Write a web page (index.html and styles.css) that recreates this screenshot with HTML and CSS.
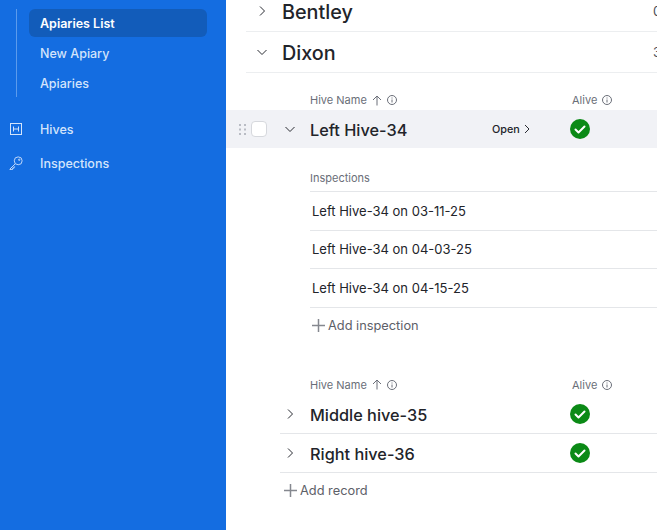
FILE: index.html
```html
<!DOCTYPE html>
<html><head>
<title>Apiaries List</title>
<link rel="stylesheet" href="styles.css">
</head>
<body>

<div class="sidebar">
	<div class="subnav">
		<a class="subnav-item current">Apiaries List</a>
		<a class="subnav-item">New Apiary</a>
		<a class="subnav-item">Apiaries</a>
	</div>
	<a class="nav-item">
		<svg class="nav-icon" width="14" height="14" viewBox="0 0 14 14" fill="none" stroke="currentColor">
			<rect x="1.5" y="1.5" width="11" height="11"/>
			<path d="M4.500 4.500v5M9.500 4.500v5M4.500 7h5"/>
		</svg>
		Hives
	</a>
	<a class="nav-item">
		<svg class="nav-icon" width="14" height="14" viewBox="0 0 16 16" fill="none" stroke="currentColor">
			<circle cx="10.500" cy="5.500" r="4.500"/>
			<circle cx="11.700" cy="4.300" r="0.800"/>
			<path d="M7 9l-6 6v0.500h3v-1.500h1.500v-1.500h1.500"/>
		</svg>
		Inspections
	</a>
</div>

<div class="main">
	<div class="group group-first">
		<svg class="chev" width="12" height="12" viewBox="0 0 12 12"><path d="M4 1.500l4.500 4.500-4.500 4.500"/></svg>
		<span class="group-name">Bentley</span>
		<span class="group-count">0</span>
	</div>
	<div class="group">
		<svg class="chev" width="12" height="12" viewBox="0 0 12 12"><path d="M1.500 4l4.500 4.500 4.500-4.500"/></svg>
		<span class="group-name">Dixon</span>
		<span class="group-count">3</span>
	</div>

	<div class="col-head col-head-first">
		<span class="col-name">Hive Name
			<svg class="sort" width="10" height="11" viewBox="0 0 10 11"><path d="M5 10.500V1M1 5l4-4 4 4"/></svg>
			<svg class="info" width="10" height="10" viewBox="0 0 10 10"><circle cx="5" cy="5" r="4.500"/><path d="M5 4.500v3M5 2.500v1"/></svg>
		</span>
		<span class="col-alive">Alive
			<svg class="info" width="10" height="10" viewBox="0 0 10 10"><circle cx="5" cy="5" r="4.500"/><path d="M5 4.500v3M5 2.500v1"/></svg>
		</span>
	</div>

	<div class="hive hive-open">
		<svg class="grip" width="7" height="11" viewBox="0 0 7 11"><path d="M0 0h2v2H0zM5 0h2v2H5zM0 4.500h2v2H0zM5 4.500h2v2H5zM0 9h2v2H0zM5 9h2v2H5z"/></svg>
		<span class="checkbox"></span>
		<svg class="chev" width="12" height="12" viewBox="0 0 12 12"><path d="M1.500 4l4.500 4.500 4.500-4.500"/></svg>
		<span class="hive-name">Left Hive-34</span>
		<span class="open">Open
			<svg class="chev" width="8" height="10" viewBox="0 0 8 10"><path d="M2 1l4 4-4 4"/></svg>
		</span>
		<svg class="tick" width="20" height="20" viewBox="0 0 20 20"><circle cx="10" cy="10" r="10"/><path d="M5.500 10.500l3 3 6-6"/></svg>
	</div>

	<div class="inspections">
		<div class="insp-head">Inspections</div>
		<div class="insp-row">Left Hive-34 on 03-11-25</div>
		<div class="insp-row">Left Hive-34 on 04-03-25</div>
		<div class="insp-row">Left Hive-34 on 04-15-25</div>
		<div class="add add-insp">
			<svg class="plus" width="13" height="13" viewBox="0 0 13 13"><path d="M6.500 0v13M0 6.500h13"/></svg>
			Add inspection
		</div>
	</div>

	<div class="col-head">
		<span class="col-name">Hive Name
			<svg class="sort" width="10" height="11" viewBox="0 0 10 11"><path d="M5 10.500V1M1 5l4-4 4 4"/></svg>
			<svg class="info" width="10" height="10" viewBox="0 0 10 10"><circle cx="5" cy="5" r="4.500"/><path d="M5 4.500v3M5 2.500v1"/></svg>
		</span>
		<span class="col-alive">Alive
			<svg class="info" width="10" height="10" viewBox="0 0 10 10"><circle cx="5" cy="5" r="4.500"/><path d="M5 4.500v3M5 2.500v1"/></svg>
		</span>
	</div>

	<div class="hive hive-closed">
		<svg class="chev" width="12" height="12" viewBox="0 0 12 12"><path d="M4 1.500l4.500 4.500-4.500 4.500"/></svg>
		<span class="hive-name">Middle hive-35</span>
		<svg class="tick" width="20" height="20" viewBox="0 0 20 20"><circle cx="10" cy="10" r="10"/><path d="M5.500 10.500l3 3 6-6"/></svg>
	</div>
	<div class="hive hive-closed">
		<svg class="chev" width="12" height="12" viewBox="0 0 12 12"><path d="M4 1.500l4.500 4.500-4.500 4.500"/></svg>
		<span class="hive-name">Right hive-36</span>
		<svg class="tick" width="20" height="20" viewBox="0 0 20 20"><circle cx="10" cy="10" r="10"/><path d="M5.500 10.500l3 3 6-6"/></svg>
	</div>

	<div class="add add-record">
		<svg class="plus" width="13" height="13" viewBox="0 0 13 13"><path d="M6.500 0v13M0 6.500h13"/></svg>
		Add record
	</div>
</div>

</body>
</html>
```

FILE: styles.css
```css
html, body
{
	height: 100%;
}
body
{
	margin: 0;
	display: flex;
	overflow: hidden;
	background-color: white;
	color: #22242a;
	font-family: "Inter", "Liberation Sans", sans-serif;
}
svg
{
	flex: none;
	display: block;
}
.sidebar
{
	width: 226px;
	flex: none;
	box-sizing: border-box;
	padding-top: 9px;
	background-color: #146de1;
	color: #d3e4fb;
	font-size: 12.5px;
	font-weight: 500;
}
.subnav
{
	display: flex;
	flex-direction: column;
	gap: 2px;
	margin: 0 19px 15px 16px;
	padding-left: 12px;
	border-left: 1px solid #5c9bec;
}
.subnav-item
{
	height: 28px;
	line-height: 29px;
	padding-left: 11px;
	border-radius: 6px;
}
.subnav-item.current
{
	background-color: #125cba;
	color: white;
	font-weight: 600;
}
.nav-item
{
	display: flex;
	align-items: center;
	height: 34px;
}
.nav-icon
{
	margin-left: 9px;
	margin-right: 17px;
}
.main
{
	flex: 1;
	min-width: 0;
	overflow: hidden;
}
.group
{
	display: flex;
	align-items: center;
	height: 40px;
	margin-left: 20px;
	border-bottom: 1px solid #eceef0;
}
.group-first
{
	height: 22px;
	padding-bottom: 9px;
}
.group .chev
{
	margin-left: 10px;
	margin-right: 14px;
}
.group-name
{
	flex: 1;
	padding-top: 2px;
	font-size: 19.8px;
	line-height: 22px;
	font-weight: 500;
}
.group-count
{
	margin-right: -1px;
	width: 5px;
	overflow: hidden;
	font-size: 13px;
	color: #4b4f58;
}
.chev path
{
	fill: none;
	stroke: #2a2c33;
	stroke-width: 1;
}
.col-head
{
	display: flex;
	align-items: center;
	height: 20px;
	margin-top: 33px;
	padding-left: 84px;
	font-size: 11px;
	color: #6a6e78;
}
.col-head-first
{
	margin-top: 17px;
}
.col-name, .col-alive
{
	display: flex;
	align-items: center;
	gap: 5px;
}
.col-name
{
	width: 262px;
}
.sort path, .info path, .info circle
{
	fill: none;
	stroke: #6a6e78;
	stroke-width: 1;
}
.hive
{
	display: flex;
	align-items: center;
	box-sizing: border-box;
	font-size: 16.3px;
	font-weight: 500;
}
.hive-open
{
	height: 38px;
	background-color: #f1f2f6;
	padding-left: 13px;
}
.hive-closed
{
	height: 39px;
	margin-left: 54px;
	border-bottom: 1px solid #e4e6e9;
}
.hive-name
{
	padding-top: 2px;
}
.grip path
{
	fill: #b9bcc4;
}
.checkbox
{
	width: 14px;
	height: 14px;
	margin-left: 5px;
	margin-right: 17px;
	border: 1px solid #d6d8dd;
	border-radius: 4px;
	background-color: white;
}
.hive .chev
{
	margin-right: 14px;
}
.hive-closed .chev
{
	margin-left: 4px;
}
.hive-open .hive-name
{
	width: 182px;
}
.hive-closed .hive-name
{
	width: 260px;
}
.open
{
	display: flex;
	align-items: center;
	width: 78px;
	gap: 3px;
	font-size: 10.8px;
	font-weight: 500;
}
.open .chev
{
	margin: 0;
}
.tick circle
{
	fill: #0b8a16;
}
.tick path
{
	fill: none;
	stroke: white;
	stroke-width: 2;
	stroke-linecap: round;
	stroke-linejoin: round;
}
.inspections
{
	margin-left: 84px;
	padding-top: 21px;
}
.insp-head
{
	height: 22px;
	line-height: 18px;
	border-bottom: 1px solid #e4e6e9;
	font-size: 11px;
	color: #6a6e78;
}
.insp-row
{
	display: flex;
	align-items: center;
	height: 37.67px;
	padding-left: 2px;
	border-bottom: 1px solid #e4e6e9;
	font-size: 13px;
}
.add
{
	display: flex;
	align-items: center;
	gap: 3px;
	font-size: 12.8px;
	color: #5d6068;
}
.add-insp
{
	height: 33px;
	padding-top: 1px;
	padding-left: 2px;
}
.add-record
{
	height: 36px;
	margin-left: 58px;
}
.plus path
{
	fill: none;
	stroke: #85888f;
	stroke-width: 1.5;
}
```
